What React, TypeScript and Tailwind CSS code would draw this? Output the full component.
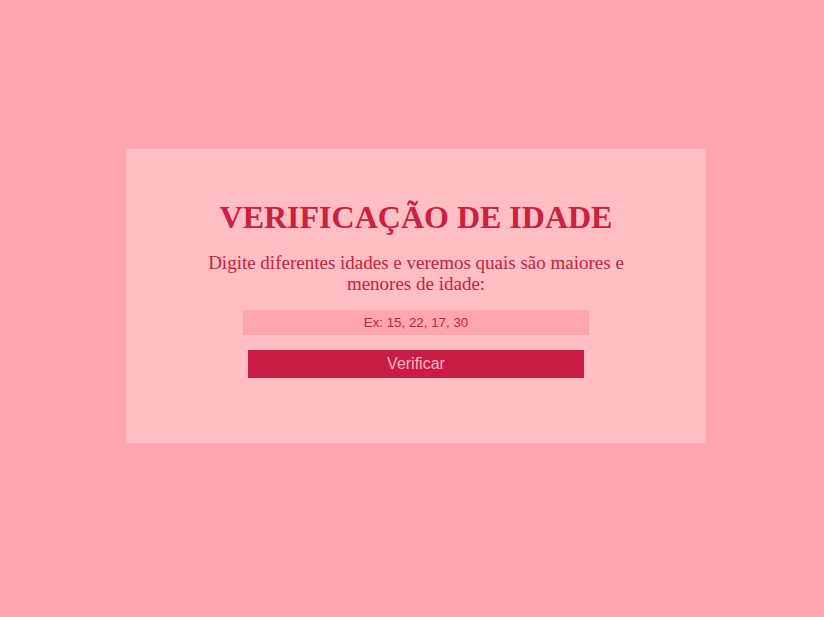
export default function App() {
    return (
        <main className="min-h-screen w-full bg-[#ffa6ae] flex items-center justify-center pb-[26px] pl-[8px]">
            <section className="w-[580px] h-[294px] bg-[#ffbdc4] flex flex-col items-center pt-[50px]">
                <h1 className="text-[32px] leading-[37px] font-bold text-[#c8223f] font-['Liberation_Serif',serif] text-center">
                    VERIFICAÇÃO DE IDADE
                </h1>
                <p className="mt-[16px] w-[440px] text-[19px] leading-[21px] text-[#c8223f] font-['Liberation_Serif',serif] text-center">
                    Digite diferentes idades e veremos quais são maiores e menores de idade:
                </p>
                <input
                    type="text"
                    placeholder="Ex: 15, 22, 17, 30"
                    className="mt-[16px] w-[346px] h-[25px] bg-[#ffa6ae] text-center text-[13.33px] text-[#c8223f] placeholder:text-[#c8223f] font-['Liberation_Sans',sans-serif] outline-none"
                />
                <button className="mt-[15px] w-[336px] h-[28px] bg-[#c91c47] text-[16px] text-[#ffb6c1] font-['Liberation_Sans',sans-serif]">
                    Verificar
                </button>
            </section>
        </main>
    )
}
